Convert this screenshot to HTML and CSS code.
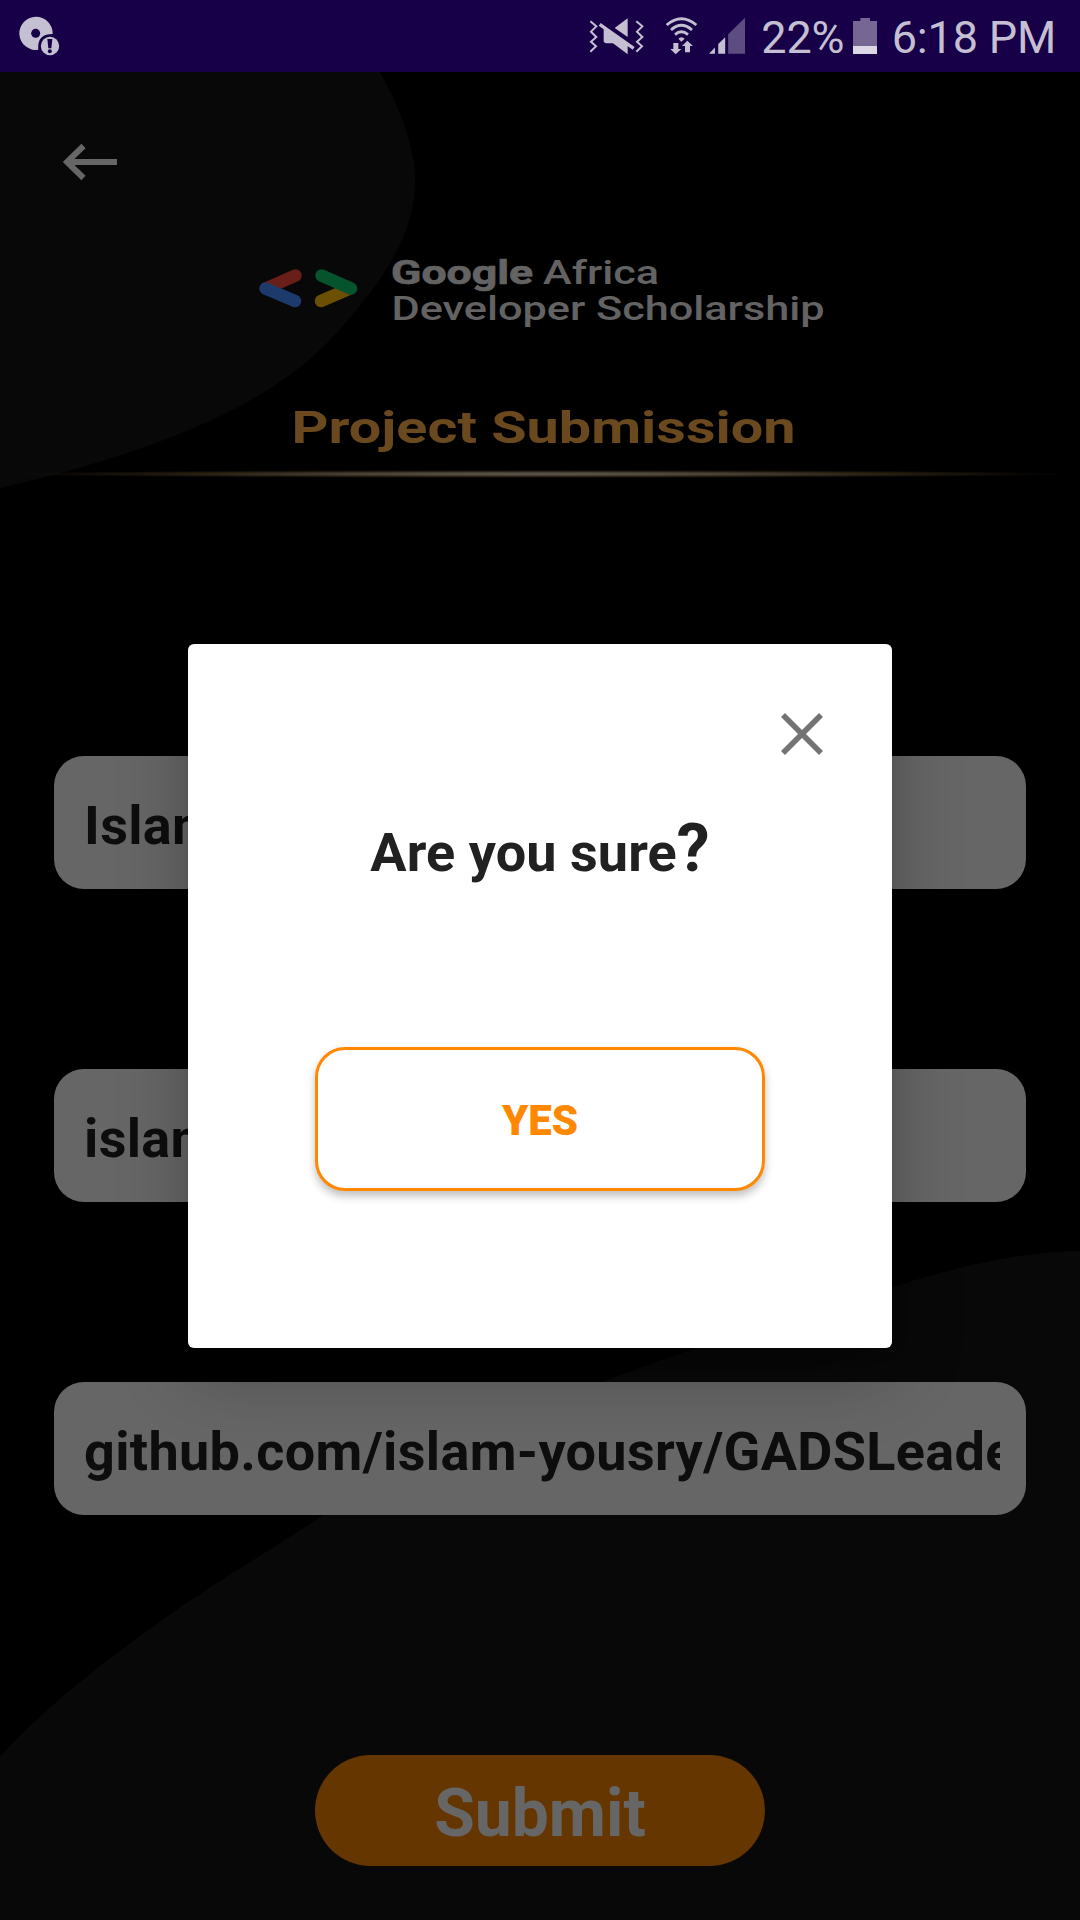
FILE: index.html
```html
<!DOCTYPE html>
<html lang="en">
<head>
<meta charset="utf-8">
<title>Project Submission</title>
<link rel="stylesheet" href="styles.css">
</head>
<body>
<div class="screen">
  <header class="status-bar">
    <svg class="disc" viewBox="54 48 126 120">
      <path d="M107 50a50 50 0 1 0 8 99.500Q110 102 158 102A50 50 0 0 0 107 50Z" fill="#c5bfd2"/>
      <circle cx="107" cy="100" r="13.500" fill="#170047"/>
      <circle cx="150" cy="138" r="27.500" fill="#c5bfd2"/>
      <path d="M142 117h15l-3 28h-9z" fill="#170047"/>
      <circle cx="149.500" cy="154" r="6" fill="#170047"/>
    </svg>
    <div class="status-right">
      <svg class="vibrate" viewBox="88 50 168 114">
        <g fill="none" stroke="#c5bfd2" stroke-width="6">
          <path d="M92 63l18 15-16 16 16 16-16 14 15 14-17 16M230 63l18 15-16 16 16 16-16 14 15 14-17 16"/>
          <path d="M120 72L222 144" stroke-width="10"/>
        </g>
        <path d="M165 83L204 54V110ZM132 84L160 100L204 132V162L160 129H138L132 124Z" fill="#c5bfd2"/>
      </svg>
      <svg class="wifi" viewBox="315 48 99 117">
        <g fill="none" stroke="#c5bfd2" stroke-width="8.500">
          <path d="M320 75Q364 37 409 75M333 90Q364 62 396 90M345 104Q364 87 384 104"/>
        </g>
        <path d="M355 116Q364 107 374 116L364 125ZM340 129h15v18h9l-17 16-16-16h9zM375 157h15v-19h9l-17-16-16 16h9z" fill="#c5bfd2"/>
      </svg>
      <svg class="signal" viewBox="449 51 109 114">
        <path d="M449 162L467 143V162ZM477 162V132L498 112V162Z" fill="#c5bfd2"/>
        <path d="M507 162V103L558 53V162Z" fill="#5c4c80"/>
      </svg>
      <span class="percent">22%</span>
      <svg class="battery" viewBox="879 51 72 114">
        <path d="M879 63H901V54H930V63H951V162H879Z" fill="#756693"/>
        <path d="M879 138H951V162H879Z" fill="#dcd7e4"/>
      </svg>
      <span class="clock">6:18 PM</span>
    </div>
  </header>

  <main class="page">
    <svg class="backdrop" viewBox="0 72 1080 1848">
      <path d="M0 72H380C402 112 415 150 415 180C415 230 390 275 330 340C270 403 165 450 0 488Z"/>
      <path d="M1080 1251C1025 1251 960 1266 895 1286C800 1313 700 1345 605 1381C500 1425 400 1475 324 1515C270 1550 215 1583 172 1613C130 1643 50 1700 0 1757V1920H1080Z"/>
    </svg>

    <svg class="back" viewBox="63 143 55 38">
      <path d="M83.500 146L67 162L83.500 178M67 162H117" fill="none" stroke="#666" stroke-width="6"/>
    </svg>

    <svg class="brand" viewBox="240 240 600 100">
      <g fill="none" stroke-linecap="round" stroke-width="12.500">
        <path d="M295.500 275.500L266 288.500" stroke="#6a1e18"/>
        <path d="M265.500 288.500L295 301" stroke="#1c3a6b"/>
        <path d="M321 301L350 288.500" stroke="#6b4f02"/>
        <path d="M321.500 275.500L351 288.500" stroke="#06542d"/>
      </g>
      <g class="brand-text">
        <text class="strong" x="391" y="283.500" textLength="142" lengthAdjust="spacingAndGlyphs">Google</text>
        <text x="543" y="283.500" textLength="116" lengthAdjust="spacingAndGlyphs">Africa</text>
        <text x="391.500" y="320" textLength="433" lengthAdjust="spacingAndGlyphs">Developer Scholarship</text>
      </g>
    </svg>

    <svg class="heading" viewBox="280 390 530 70">
      <text x="291.500" y="442.700" textLength="504" lengthAdjust="spacingAndGlyphs">Project Submission</text>
    </svg>
    <div class="divider"></div>

    <form class="fields">
      <div class="field"><span>Islam Yousry</span></div>
      <div class="field"><span>islam.yousry@gmail.com</span></div>
      <div class="field"><span>github.com/islam-yousry/GADSLeaderboard</span></div>
    </form>
    <div class="submit">Submit</div>
  </main>

  <section class="dialog">
    <svg class="close" viewBox="0 0 42 42">
      <path d="M2 2L40 40M40 2L2 40" stroke="#737373" stroke-width="5.600"/>
    </svg>
    <h2 class="question">Are you sure<span class="mark">?</span></h2>
    <div class="yes">YES</div>
  </section>
</div>
</body>
</html>
```

FILE: styles.css
```css
* {
  box-sizing: border-box;
}

body {
  margin: 0;
  background: #000;
  font-family: Roboto, "Liberation Sans", sans-serif;
}

svg {
  display: block;
  flex: none;
}

.screen {
  position: relative;
  width: 1080px;
  height: 1920px;
  overflow: hidden;
  display: flex;
  flex-direction: column;
}

/* Status bar */
.status-bar {
  height: 72px;
  flex: none;
  display: flex;
  justify-content: space-between;
  align-items: flex-start;
  padding: 16px 24px 0 18px;
  background: #170047;
  color: #c5bfd2;
  font-size: 45px;
  line-height: 44px;
  letter-spacing: -.2px;
}

.status-right {
  display: flex;
  align-items: flex-start;
}

.disc { width: 42px; height: 40px; }
.vibrate { width: 56px; height: 38px; margin: 1px 20px 0 0; }
.wifi { width: 33px; height: 39px; margin-right: 11px; }
.signal { width: 36px; height: 38px; margin: 1px 16px 0 0; }
.battery { width: 24px; height: 38px; margin: 1px 14.500px 0 9px; }

/* Submission page */
.page {
  position: relative;
  flex: 1;
  display: flex;
  flex-direction: column;
  align-items: center;
}

.backdrop {
  position: absolute;
  inset: 0;
  width: 1080px;
  height: 1848px;
  z-index: -1;
  fill: #080808;
}

.back {
  width: 55px;
  height: 38px;
  align-self: flex-start;
  margin: 71px 0 0 63px;
}

.brand {
  width: 600px;
  height: 100px;
  margin-top: 59px;
}

.brand-text {
  fill: #636363;
  font-size: 33.500px;
  font-weight: 500;
}

.brand-text .strong {
  font-weight: 700;
  stroke: #636363;
  stroke-width: .7px;
}

.heading {
  width: 530px;
  height: 70px;
  margin: 50px 0 0 10px;
  fill: #69491d;
  font-size: 45px;
  font-weight: 700;
}

.divider {
  width: 1060px;
  height: 8px;
  margin-top: 10px;
  background: radial-gradient(closest-side, #5e5a52 0%, #4a4236 35%, #20180d 72%, transparent 100%);
}

.fields {
  width: 972px;
  margin-top: 278px;
  display: flex;
  flex-direction: column;
  gap: 180px;
}

.field {
  height: 133px;
  padding: 36px 26px 0 30px;
  border-radius: 30px;
  background: #666;
  color: #0d0d0d;
  font-size: 54px;
  font-weight: 700;
  line-height: 68px;
  letter-spacing: .34px;
}

.field span {
  display: block;
  overflow: hidden;
  white-space: nowrap;
}

.submit {
  width: 450px;
  height: 111px;
  margin-top: 240px;
  border-radius: 56px;
  background: #663600;
  color: #666;
  font-size: 66px;
  font-weight: 700;
  line-height: 117px;
  text-align: center;
}

/* Confirmation dialog over the page */
.dialog {
  position: absolute;
  left: 188px;
  top: 644px;
  width: 704px;
  height: 704px;
  display: flex;
  flex-direction: column;
  align-items: center;
  border-radius: 6px;
  background: #fff;
  box-shadow: 0 28px 72px rgba(0, 0, 0, .24), 0 0 24px rgba(0, 0, 0, .06);
}

.close {
  width: 42px;
  height: 42px;
  align-self: flex-end;
  margin: 69px 69px 0 0;
}

.question {
  margin: 54px 0 0;
  height: 80px;
  color: #212121;
  font-size: 54px;
  font-weight: 700;
  line-height: 80px;
  letter-spacing: .08px;
}

.mark { font-size: 66px; }

.yes {
  width: 450px;
  height: 144px;
  margin-top: 158px;
  border: 3px solid #ff8800;
  border-radius: 30px;
  background: #fff;
  box-shadow: 0 5px 9px rgba(0, 0, 0, .25);
  color: #ff8800;
  font-size: 42px;
  font-weight: 900;
  line-height: 141px;
  text-align: center;
}
```
